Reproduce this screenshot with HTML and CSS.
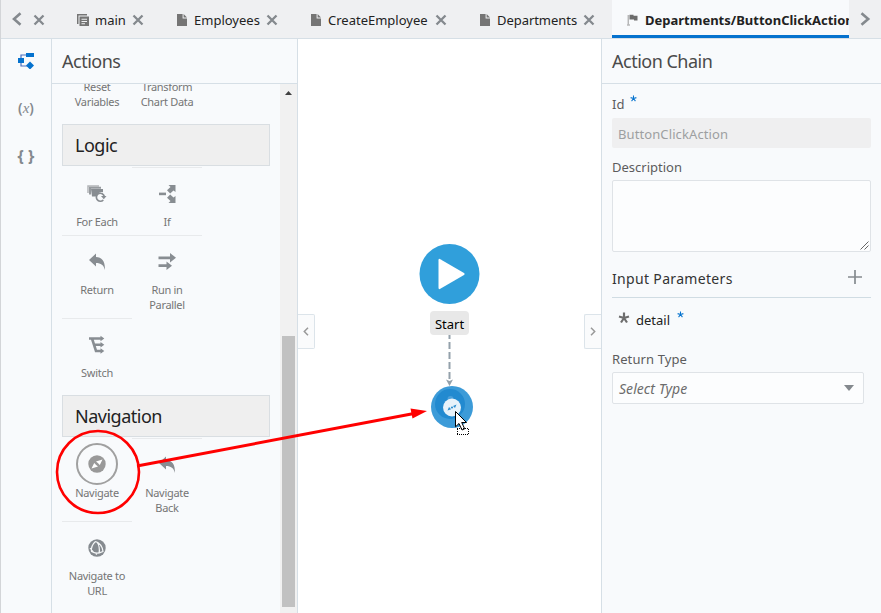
FILE: index.html
```html
<!DOCTYPE html>
<html lang="en">
<head>
<meta charset="utf-8">
<title>Action Chain Designer</title>
<link rel="stylesheet" href="styles.css">
</head>
<body>
<svg width="0" height="0" class="defs">
  <symbol id="close" viewBox="0 0 12 12"><path d="M1.500 1.500 10.500 10.500M10.500 1.500 1.500 10.500" fill="none" stroke="#84898e" stroke-width="2.300"/></symbol>
  <symbol id="file" viewBox="0 0 10 12"><path d="M0 0h5.600v4.400H10V12H0zM6.600 0 10 3.500H6.600z" fill="#757575"/></symbol>
  <symbol id="back" viewBox="0 0 20 20"><path d="M2 8 9 1.500v3.500c6 .2 9.300 4.200 8.900 13C16.700 13 14 11 9 11V14.500z" fill="#888d92"/></symbol>
</svg>
<div class="app">
  <header class="tabs">
    <svg class="prev" width="11" height="14" viewBox="0 0 11 14"><path d="M9.500 1.200 3 7l6.500 5.800" fill="none" stroke="#84898e" stroke-width="2.600"/></svg>
    <svg class="first" width="12" height="12"><use href="#close"/></svg>
    <div class="tab main"><svg width="12" height="12" viewBox="0 0 12 12"><path d="M0 0h10v1.500H1.500V10H0z" fill="#757575"/><path d="M2.500 2.500H12V12H2.500zM4.500 4.700v1.100H10V4.700zM4.500 7v1.100H10V7zM4.500 9.200v1H8v-1z" fill="#757575" fill-rule="evenodd"/></svg><span>main</span><svg class="x" width="12" height="12"><use href="#close"/></svg></div>
    <div class="tab emp"><svg width="10" height="12"><use href="#file"/></svg><span>Employees</span><svg class="x" width="12" height="12"><use href="#close"/></svg></div>
    <div class="tab create"><svg width="10" height="12"><use href="#file"/></svg><span>CreateEmployee</span><svg class="x" width="12" height="12"><use href="#close"/></svg></div>
    <div class="tab dept"><svg width="10" height="12"><use href="#file"/></svg><span>Departments</span><svg class="x" width="12" height="12"><use href="#close"/></svg></div>
    <div class="tab active"><svg width="11" height="12" viewBox="0 0 11 12"><path d="M1.200 1v9.500M0 11h3" stroke="#999" fill="none"/><path d="M2.500.8h4v1h4v4.700H7v-1H2.500z" fill="#6c6c6c"/></svg><span>Departments/ButtonClickAction</span></div>
    <svg class="next" width="11" height="14" viewBox="0 0 11 14"><path d="M1.500 1.200 8.200 7l-6.700 5.800" fill="none" stroke="#84898e" stroke-width="2.600"/></svg>
  </header>
  <main class="body">
    <nav class="rail">
      <svg width="16" height="16" viewBox="0 0 16 16"><path d="M3 6V2h6M3 9v4h9" fill="none" stroke="#4a6fc0" stroke-width="1.200"/><path d="M8 0h8v4H8zM0 5h6v5H0zM12 8.500l4 4-4 4-4-4z" fill="#0572ce"/></svg>
      <span class="fx">(<i>x</i>)</span>
      <span class="braces">{ }</span>
    </nav>
    <section class="palette">
      <h2>Actions</h2>
      <div class="scroller">
        <div class="list">
          <div class="items lead">
            <div class="item"><div class="glyph"></div>Reset Variables</div>
            <div class="item"><div class="glyph"></div>Transform Chart Data</div>
          </div>
          <h3>Logic</h3>
          <div class="items">
            <div class="item"><div class="glyph"><svg width="20" height="20" viewBox="0 0 20 20"><path d="M1 9V2h11" fill="none" stroke="#b2b5b8" stroke-width="1.500"/><path d="M3 10.500V3.800H14" fill="none" stroke="#969a9e" stroke-width="2"/><path d="M4 5h12v3.200a5.500 5.500 0 0 0-6.500 4.300H5z" fill="#888d92"/><path d="M17.300 12.500a4 4 0 1 0-1 3.500" fill="none" stroke="#888d92" stroke-width="1.700"/><path d="M14 12h5.500l-2.700 3.200z" fill="#888d92"/></svg></div>For Each</div>
            <div class="item line"><div class="glyph"><svg width="20" height="20" viewBox="0 0 20 20"><path d="M2 8.600h7v2.600H2z" fill="#888d92"/><path d="M11.500 1H18.500v7l-2-1.500-3.300 3-3.200-3.200L13.500 3zM10 13.700l3.200-3.200 3.300 3 2-1.500V19h-7l2-2z" fill="#888d92"/></svg></div>If</div>
            <div class="item line"><div class="glyph"><svg width="20" height="20"><use href="#back"/></svg></div>Return</div>
            <div class="item line"><div class="glyph"><svg width="20" height="20" viewBox="0 0 20 20"><path d="M1.500 4.500H13V1L19 5.800l-6 4.700V7.300H1.500zM1.500 12.300H9.500V9.500l5.500 4.200L9.500 18v-2.900H1.500z" fill="#888d92"/></svg></div>Run in Parallel</div>
            <div class="item line"><div class="glyph"><svg width="20" height="20" viewBox="0 0 20 20"><path d="M2 3.500h13M5 3.500 9 16h6M7.500 9.800H15" fill="none" stroke="#888d92" stroke-width="2.600"/><path d="M13.500.8l3.800 2.700-3.800 2.700zM13.500 7l3.800 2.800-3.800 2.800zM13.500 13.200l3.800 2.800-3.800 2.800z" fill="#888d92"/></svg></div>Switch</div>
          </div>
          <h3>Navigation</h3>
          <div class="items">
            <div class="item"><div class="glyph"><svg class="ring" width="42" height="42" viewBox="-21 -21 42 42"><circle r="20" fill="none" stroke="#a0a0a0" stroke-width="2"/><circle r="8.700" fill="#999"/><path d="M5.500-4.500 2.800 1-1-2.500zM-5.500 4.500-2.800-1 1 2.500z" fill="#fff"/><circle r="1.300" fill="#999"/></svg></div>Navigate</div>
            <div class="item line"><div class="glyph"><svg width="20" height="20"><use href="#back"/></svg></div>Navigate Back</div>
            <div class="item line"><div class="glyph"><svg width="18" height="18" viewBox="-9 -9 18 18"><circle r="8.700" fill="#858a8f"/><path d="M-1.500-6.500C-5-3.500-6-.5-5.500 3.500-2 5.500 2 5.500 6 3.500 5.500-1 3-5-1.500-6.500M0-6C2.500-2.500 3 1 2 6M-7 0C-5 3-3 5 0 6.500" fill="none" stroke="#f5f7f8" stroke-width="1.200"/></svg></div>Navigate to URL</div>
          </div>
        </div>
        <div class="scrollbar"><svg width="7" height="4" viewBox="0 0 7 4"><path d="M0 4 3.500 0 7 4z" fill="#404040"/></svg><div class="thumb"></div></div>
      </div>
    </section>
    <section class="canvas">
      <button class="fold left"><svg width="6" height="9" viewBox="0 0 6 9"><path d="M5 .8 1.300 4.500 5 8.200" fill="none" stroke="#999" stroke-width="1.500"/></svg></button>
      <div class="flow">
        <svg width="61" height="60" viewBox="0 0 61 60"><circle cx="30.500" cy="30" r="30" fill="#309fdb"/><path d="M19.500 16.200q0-2 1.800-1L45 29q1.500 1 0 2L21.300 44.800q-1.800 1-1.800-1z" fill="#fff"/></svg>
        <div class="start">Start</div>
        <svg class="link" width="11" height="51" viewBox="0 0 11 51"><path d="M5.500 0V47" stroke="#94a1ab" stroke-width="2" stroke-dasharray="7 3" stroke-dashoffset="3"/><path d="M2 44.500 5.500 46l3.500-1.500L5.500 51z" fill="#94a1ab"/></svg>
        <svg class="drop" width="42" height="42" viewBox="0 0 42 42"><circle cx="21" cy="21" r="21" fill="#3c9bd8"/><circle cx="19" cy="18" r="15" fill="#228ad0"/><circle cx="19.500" cy="13" r="3" fill="#4a9fda"/><circle cx="21" cy="21.500" r="9" fill="#e7f2fa"/><path d="M25.500 18.500 24 22l-2-2zM16.500 24.500l1.500-3.500 2.200 2.200z" fill="#2e8fd0"/><circle cx="21" cy="21.500" r="1.100" fill="#2e8fd0"/></svg>
      </div>
      <button class="fold right"><svg width="6" height="9" viewBox="0 0 6 9"><path d="M1 .8 4.700 4.500 1 8.200" fill="none" stroke="#999" stroke-width="1.500"/></svg></button>
    </section>
    <aside class="props">
      <h2>Action Chain</h2>
      <div class="form">
        <div class="label id">Id <svg class="star" width="7" height="7" viewBox="-4 -4 8 8"><path d="M0-3.500V0M0 0-3.300-1M0 0 3.300-1M0 0-2.200 3M0 0 2.200 3" stroke="#0572ce" stroke-width="1.200"/></svg></div>
        <div class="readonly">ButtonClickAction</div>
        <div class="label desc">Description</div>
        <div class="area"><svg width="9" height="9" viewBox="0 0 9 9"><path d="M.5 8.500l8-8M4.500 8.500l4-4" stroke="#555" stroke-width=".9"/></svg></div>
        <div class="params"><span>Input Parameters</span><svg width="14" height="14" viewBox="0 0 14 14"><path d="M7 0v14M0 7h14" stroke="#858a8f" stroke-width="1.700"/></svg></div>
        <div class="detail"><svg width="12" height="12" viewBox="-6 -6 12 12"><path d="M0-5.500V0M0 0-5-1.500M0 0 5-1.500M0 0-3 4.500M0 0 3 4.500" stroke="#6d6d6d" stroke-width="2.200"/></svg><span>detail</span><svg class="star" width="7" height="7" viewBox="-4 -4 8 8"><path d="M0-3.500V0M0 0-3.300-1M0 0 3.300-1M0 0-2.200 3M0 0 2.200 3" stroke="#0572ce" stroke-width="1.200"/></svg></div>
        <div class="label type">Return Type</div>
        <div class="select"><i>Select Type</i><svg width="10" height="6" viewBox="0 0 10 6"><path d="M0 0h10L5 6z" fill="#84898e"/></svg></div>
      </div>
    </aside>
  </main>
  <svg class="annotation" width="881" height="613" viewBox="0 0 881 613">
    <ellipse cx="98" cy="472" rx="41" ry="41" fill="none" stroke="#f00" stroke-width="2.600"/>
    <path d="M137 466 414 413.500" stroke="#f00" stroke-width="3"/>
    <path d="M410.500 408.500 427 411 412.500 418.500z" fill="#f00"/>
    <path d="M455.500 411.500v15.300l3.500-3.300 3 6.500 2.700-1.200-3-6.300h4.800z" fill="#fff" stroke="#000"/>
    <path d="M457 428.500h12M457 434.500h12" stroke="#000" stroke-dasharray="1 1"/>
    <path d="M457.500 429v6M468.500 429v6" stroke="#000" stroke-dasharray="1 1"/>
  </svg>
</div>
</body>
</html>
```
FILE: styles.css
```css
* { box-sizing: border-box; }
body { margin: 0; font-family: "Noto Sans", sans-serif; font-size: 13px; color: #222; background: #fff; }
svg { display: block; flex: none; }
h2, h3 { margin: 0; font-weight: 400; letter-spacing: -0.5px; }
.defs { position: absolute; }
.app { position: relative; width: 881px; height: 613px; display: flex; flex-direction: column; border-left: 1px solid #d3d5d8; overflow: hidden; }
.tabs { height: 39px; flex: none; display: flex; align-items: center; background: #eff0f2; border-bottom: 1px solid #d6dfe6; }
.prev { margin-left: 10px; }
.first { margin: 2px 0 0 11px; }
.tab { height: 38px; display: flex; align-items: center; gap: 6px; padding: 2px 0 0 16px; white-space: nowrap; flex: none; line-height: 18px; }
.main { width: 99px; margin-left: 16px; }
.emp { width: 134px; }
.create { width: 169px; }
.dept { width: 149px; }
.emp, .create, .dept { gap: 7px; padding-left: 17px; }
.emp .x { margin-left: -1px; }
.dept { letter-spacing: -0.05px; }
.dept .x { margin-left: -1px; }
.active { width: 237px; padding: 5px 0 0 15px; gap: 7px; font-weight: 700; background: #f8fafc; overflow: hidden; border-bottom: 3px solid #0572ce; }
.next { margin-left: 11px; }
.body { flex: 1; min-height: 0; display: flex; }
.rail { width: 51px; flex: none; background: #f8fafc; border-right: 1px solid #d6dfe6; display: flex; flex-direction: column; align-items: center; padding-top: 14px; color: #84898e; }
.fx { margin-top: 29px; height: 20px; line-height: 20px; font-weight: 600; font-size: 14px; }
.fx i { font-family: "Liberation Serif", serif; font-size: 15px; font-weight: 400; }
.braces { margin-top: 27px; height: 22px; line-height: 22px; font-size: 16px; font-weight: 700; }
.palette { width: 246px; flex: none; background: #f8fafc; border-right: 1px solid #d6dfe6; display: flex; flex-direction: column; }
h2 { height: 45px; flex: none; line-height: 45px; padding-left: 10px; font-size: 18px; color: #4a4a4a; border-bottom: 1px solid #d6dfe6; }
.scroller { flex: 1; min-height: 0; display: flex; }
.list { flex: 1; overflow: hidden; padding: 0 10px; }
.lead { margin-top: -52px; }
h3 { height: 42px; margin: 9px 0 1px; padding-left: 12px; border: 1px solid #d9dee2; background: #efefef; line-height: 41px; font-size: 18px; color: #222; }
.items { display: grid; grid-template-columns: 70px 70px; }
.item { border-top: 1px solid transparent; padding: 15px 2px 6px; text-align: center; font-size: 11px; line-height: 15px; letter-spacing: -0.3px; color: #757575; }
.line { border-top-color: #e8eaec; }
.glyph { height: 21px; margin-bottom: 10px; display: flex; align-items: center; justify-content: center; }
.ring { margin-bottom: 2px; }
.scrollbar { width: 17px; flex: none; background: #f1f1f1; display: flex; flex-direction: column; align-items: center; padding: 7px 0 6px; }
.thumb { width: 13px; height: 271px; background: #c1c1c1; margin-top: auto; }
.canvas { flex: 1; background: #fff; display: flex; justify-content: space-between; }
.fold { width: 17px; height: 35px; margin-top: 275px; padding: 0; border: 1px solid #dce4ea; background: #fafbfc; display: flex; align-items: center; justify-content: center; }
.left { border-left: 0; border-radius: 0 2px 2px 0; }
.right { border-right: 0; border-radius: 2px 0 0 2px; }
.flow { display: flex; flex-direction: column; align-items: center; padding-top: 205px; }
.start { margin-top: 7px; height: 24px; width: 39px; border-radius: 4px; background: #e8e8e8; line-height: 26px; text-align: center; color: #000; }
.drop { margin-left: 5px; }
.props { width: 280px; flex: none; background: #f8fafc; border-left: 1px solid #d6dfe6; }
.form { padding: 0 10px; }
.label { color: #5c5c5c; line-height: 20px; height: 20px; }
.id { display: flex; margin-top: 10px; }
.star { margin-left: 6px; margin-top: 1px; }
.readonly { margin-top: 4px; height: 30px; line-height: 33px; padding-left: 6px; border-radius: 2px; background: #efeff0; color: #9d9fa1; letter-spacing: 0.1px; }
.desc { margin-top: 9px; }
.area { margin-top: 3px; height: 72px; border: 1px solid #dfe3e7; border-radius: 2px; background: #fcfdfe; display: flex; justify-content: flex-end; align-items: flex-end; padding: 1px; }
.params { height: 46px; display: flex; justify-content: space-between; align-items: center; padding: 8px 9px 0 0; border-bottom: 1px solid #d0dce3; font-size: 14px; letter-spacing: 0.33px; color: #333; }
.params svg { margin-bottom: 4px; }
.detail { height: 20px; line-height: 20px; display: flex; margin-top: 12px; padding-left: 6px; gap: 6px; }
.detail > svg:first-child { margin-top: 2px; }
.detail .star { margin-left: 1px; margin-top: 1px; }
.type { margin-top: 19px; letter-spacing: 0.1px; }
.select { margin-top: 3px; width: 252px; height: 32px; display: flex; align-items: center; justify-content: space-between; padding: 0 9px 0 6px; border: 1px solid #dfe3e7; border-radius: 2px; background: #fcfdfe; color: #6c6c6c; }
.select i { font-size: 14px; letter-spacing: 0.05px; }
.annotation { position: absolute; left: -1px; top: 0; }
```
